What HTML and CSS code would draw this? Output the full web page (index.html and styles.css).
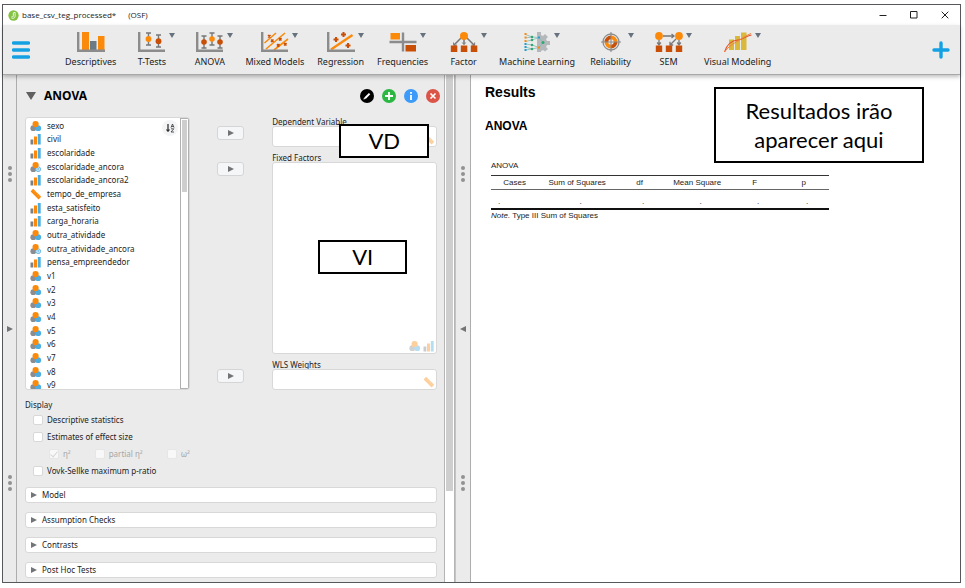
FILE: index.html
```html
<!DOCTYPE html>
<html lang="pt-BR">
<head>
<meta charset="utf-8">
<title>base_csv_teg_processed* (OSF)</title>
<link rel="stylesheet" href="styles.css">
</head>
<body>
<svg class="sprite" aria-hidden="true">
  <symbol id="nominal" viewBox="0 0 12 12"><circle cx="3.3" cy="8.2" r="2.9" fill="#8a8d91"/><circle cx="8.2" cy="8.2" r="2.9" fill="#4cade0"/><circle cx="5.6" cy="4" r="3.1" fill="#fb8a0b"/></symbol>
  <symbol id="nominal-text" viewBox="0 0 12 12"><circle cx="3.3" cy="8.2" r="2.9" fill="#8a8d91"/><circle cx="8.2" cy="8.2" r="2.4" fill="#dff1fb" stroke="#62b6e4"/><path d="M7 8h2.6M8.3 7v2.6" stroke="#62b6e4" stroke-width=".7"/><circle cx="5.6" cy="4" r="3.1" fill="#fb8a0b"/></symbol>
  <symbol id="ordinal" viewBox="0 0 12 12"><path fill="#7d8084" d="M.5 6.5h2.8v5H.5z"/><path fill="#fb8a0b" d="M4 3.5h3v8H4z"/><path fill="#4cade0" d="M7.8 1h2.9v10.5H7.8z"/></symbol>
  <symbol id="scale" viewBox="0 0 12 12"><path fill="#fb8a0b" d="M3.1.8.6 3.4l8 8 2.6-2.6z"/><path d="M4.9 2.8 4 3.7M6.5 4.4l-.9.9M8.1 6l-.9.9M9.7 7.6l-.9.9" stroke="#ffd09a" stroke-width=".5"/></symbol>
  <symbol id="play" viewBox="0 0 6 6"><path fill="#727578" d="M0 0v6l6-3z"/></symbol>
  <symbol id="down" viewBox="0 0 6 5"><path fill="#66727e" d="M0 0h6L3 5z"/></symbol>
  <symbol id="grip" viewBox="0 0 4 16"><g fill="#929292"><circle cx="2" cy="2" r="2"/><circle cx="2" cy="8" r="2"/><circle cx="2" cy="14" r="2"/></g></symbol>
</svg>

<div class="window">
  <header class="titlebar">
    <svg class="app-logo" viewBox="0 0 12 12" aria-hidden="true"><circle cx="6" cy="6" r="5.6" fill="#84c341"/><path d="M7.8 2.6v4.2a2.6 2.6 0 0 1-4.3 1.7M5.8 3v3.6a1.3 1.3 0 0 1-2 .7M7.8 2.6 5.8 3" fill="none" stroke="#fff" stroke-width=".9"/></svg>
    <span>base_csv_teg_processed*</span><span class="source">(OSF)</span>
    <div class="window-controls">
      <button aria-label="Minimize"><svg viewBox="0 0 8 8"><path d="M.5 4.500h7"/></svg></button>
      <button aria-label="Maximize"><svg viewBox="0 0 8 8"><path d="M.5.5h6.500v6.500H.5z"/></svg></button>
      <button aria-label="Close"><svg viewBox="0 0 8 8"><path d="m.7.7 6.6 6.6M7.3.7.7 7.3"/></svg></button>
    </div>
  </header>

  <nav class="toolbar" aria-label="Analyses">
    <button class="menu" aria-label="Menu"><svg viewBox="0 0 18 18"><path d="M1.5 2h15M1.5 9h15M1.5 16h15" stroke="#14a1e3" stroke-width="3.4" stroke-linecap="round"/></svg></button>
    <div class="analyses">
      <button class="analysis"><svg class="icon" viewBox="0 0 28 20"><path fill="#fb8a0b" d="M5 0h7v18H5zM21 4h6.5v14H21z"/><path fill="#6c7a86" d="M13 9h6.500v9H13z"/><path d="M1.200 0v18.800H28" fill="none" stroke="#8c8c8c" stroke-width="2.400"/></svg>Descriptives</button>
      <button class="analysis"><svg class="icon" viewBox="0 0 28 20"><path d="M10.500 1v12M8 1h5M8 13h5M20.500 3v12M18 3h5M18 15h5" stroke="#777" stroke-width="1.400"/><circle cx="10.500" cy="7" r="2.900" fill="#fb8a0b"/><circle cx="20.500" cy="9.200" r="2.900" fill="#c94f07"/><path d="M1.200 0v18.800H27" fill="none" stroke="#8c8c8c" stroke-width="2.400"/></svg><svg class="arrow"><use href="#down"/></svg>T-Tests</button>
      <button class="analysis"><svg class="icon" viewBox="0 0 28 20"><path d="M8 4v12M5.500 4h5M5.500 16h5M16 1v12M13.500 1h5M13.500 13h5M24 4v12M21.500 4h5M21.500 16h5" stroke="#777" stroke-width="1.400"/><circle cx="8" cy="10" r="2.800" fill="#c94f07"/><circle cx="16" cy="7" r="2.800" fill="#fb8a0b"/><circle cx="24" cy="10" r="2.800" fill="#c94f07"/><path d="M1.200 0v18.800H27" fill="none" stroke="#8c8c8c" stroke-width="2.400"/></svg><svg class="arrow"><use href="#down"/></svg>ANOVA</button>
      <button class="analysis"><svg class="icon" viewBox="0 0 28 20"><path d="M3.500 11 15 1M5 17 24 1M13 18 27 7" stroke="#fb8a0b" stroke-width="1.600"/><path d="m7 3 2.500 2.500M9.500 3 7 5.500M10 7.500l2.500 2.500m0-2.500L10 10M18 6l2.500 2.500m0-2.500L18 8.500M16 12l2.500 2.500m0-2.500L16 14.500M23 11l2.500 2.500m0-2.500L23 13.500" stroke="#c94f07" stroke-width="1.500"/><path d="M1.200 0v18.800H27" fill="none" stroke="#8c8c8c" stroke-width="2.400"/></svg><svg class="arrow"><use href="#down"/></svg>Mixed Models</button>
      <button class="analysis"><svg class="icon" viewBox="0 0 28 20"><path d="M4 17.500 25.500 3" stroke="#fb8a0b" stroke-width="2.300"/><path d="M6.500 7.500h5M9 5v5M14 2.500h5M16.500 0v5M18.500 13.500h5M21 11v5" stroke="#c94f07" stroke-width="2"/><path d="M1.200 0v18.800H28" fill="none" stroke="#8c8c8c" stroke-width="2.400"/></svg><svg class="arrow"><use href="#down"/></svg>Regression</button>
      <button class="analysis"><svg class="icon" viewBox="0 0 28 20"><path d="M14 .500v19M.500 10h27" stroke="#8c8c8c" stroke-width="2.400"/><path fill="#fb8a0b" d="M1.500 1h9.500v6.500H1.500z"/><path fill="#c94f07" d="M16.500 13h10.500v6.500H16.500z"/></svg><svg class="arrow"><use href="#down"/></svg>Frequencies</button>
      <button class="analysis"><svg class="icon" viewBox="0 0 28 20"><path d="M11 6 4 13M14 7v5M17 6l7 7" stroke="#777" stroke-width="1.500"/><path d="m3.500 10.500.300 3 3-.500M12.300 10.500 14 12.700l1.700-2.200M21.500 13l3 .500.200-3" fill="none" stroke="#777"/><circle cx="14" cy="4" r="4" fill="#fb8a0b"/><path fill="#c94f07" d="M.800 13.500h6.500V20H.800zM10.800 13.500h6.500V20h-6.500zM20.800 13.500h6.500V20h-6.500z"/></svg><svg class="arrow"><use href="#down"/></svg>Factor</button>
      <button class="analysis"><svg class="icon" viewBox="0 0 28 20"><path fill="#b5b8ba" d="M14 0h4v3l2 1 2-2 3 3-2 2 1 2h3v4h-3l-1 2 2 2-3 2.500-2-1.500-2 1V20h-4z"/><path d="M2.500 2.500 9 5 16 5.500 20 10.500 16 15.500 9 13 2.500 12M2.500 6 9 5M2.500 9.500 9 8 16 5.500M2.500 15l6.500 2 7-1.500M2.500 18 9 17" fill="none" stroke="#87b7ae" stroke-width=".8"/><g fill="#2eaa76"><circle cx="9" cy="5" r="1.300"/><circle cx="9" cy="8" r="1.300"/><circle cx="9" cy="13" r="1.300"/><circle cx="9" cy="17" r="1.300"/><circle cx="20" cy="10.500" r="1.500"/></g><path fill="#fb8a0b" d="M1.500 1h2v2h-2zM1.500 4.500h2v2h-2zM1.500 8h2v2h-2zM15 14.500h2v2h-2z"/><path fill="#229fd8" d="M1.500 11h2v2h-2zM1.500 14h2v2h-2zM1.500 17h2v2h-2zM15 4.500h2v2h-2z"/></svg><svg class="arrow"><use href="#down"/></svg>Machine Learning</button>
      <button class="analysis"><svg class="icon" viewBox="0 0 28 20"><path d="M14 3.500a6.500 6.500 0 0 1 6.500 6.500H14v6.500A6.500 6.500 0 0 1 7.500 10H14z" fill="#fb8a0b"/><path d="M14 3.500V10H7.500A6.500 6.500 0 0 1 14 3.500zM14 16.500V10h6.500a6.500 6.500 0 0 1-6.500 6.500z" fill="#c94f07"/><circle cx="14" cy="10" r="2.700" fill="#ebebeb"/><circle cx="14" cy="10" r="8" fill="none" stroke="#8c8c8c" stroke-width="1.300"/><path d="M14 0v20M4 10h20" stroke="#8c8c8c" stroke-width="1.100"/></svg><svg class="arrow"><use href="#down"/></svg>Reliability</button>
      <button class="analysis"><svg class="icon" viewBox="0 0 28 20"><path d="M8 4h11M4 8v5M24 8v5M21 7l-6 6M16.500 2 19 4l-2.500 2M2.200 10.500 4 13l1.800-2.500M22.200 10.500 24 13l1.800-2.500M15 9.800V13h3.200" fill="none" stroke="#777" stroke-width="1.300"/><circle cx="4" cy="4" r="3.900" fill="#fb8a0b"/><circle cx="24" cy="4" r="3.900" fill="#fb8a0b"/><path fill="#c94f07" d="M.800 13.500h6.400V20H.800zM10.800 13.500h6.400V20h-6.400zM20.800 13.500h6.400V20h-6.400z"/></svg><svg class="arrow"><use href="#down"/></svg>SEM</button>
      <button class="analysis"><svg class="icon" viewBox="0 0 28 20"><path fill="#d9b93c" d="M5 7.500h5V18H5zM11 4h5v14h-5zM17 .500h5.500V18H17z"/><path d="M.500 20C3 12 8 8.500 14 8S21 4 27.500 3" fill="none" stroke="#e2552b" stroke-width="1.100"/><path d="M.500 20C5 14 9 12 14 9S21 4 27 1.500" fill="none" stroke="#f3813a"/></svg><svg class="arrow"><use href="#down"/></svg>Visual Modeling</button>
    </div>
    <button class="add" aria-label="Add module"><svg viewBox="0 0 18 18"><path d="M9 2v14M2 9h14" stroke="#14a1e3" stroke-width="3.400" stroke-linecap="round"/></svg></button>
  </nav>

  <main class="workspace">
    <div class="rail rail-left">
      <svg class="grip"><use href="#grip"/></svg>
      <svg class="rail-arrow" viewBox="0 0 6 6"><use href="#play"/></svg>
      <svg class="grip"><use href="#grip"/></svg>
    </div>

    <section class="form-panel">
      <div class="form">
        <div class="form-header">
          <svg class="collapse" viewBox="0 0 10 8"><path fill="#606060" d="M0 0h10L5 8z"/></svg>
          <h1>ANOVA</h1>
          <button aria-label="Edit title"><svg viewBox="0 0 14 14"><circle cx="7" cy="7" r="7"/><path d="M5 9.200 9.600 4.600" stroke="#fff" stroke-width="2"/><path d="m3.400 10.600.7-2 1.300 1.300z" fill="#fff"/></svg></button>
          <button aria-label="Duplicate"><svg viewBox="0 0 14 14"><circle cx="7" cy="7" r="7" fill="#2bb741"/><path d="M7 3v8M3 7h8" stroke="#fff" stroke-width="1.800"/></svg></button>
          <button aria-label="Information"><svg viewBox="0 0 14 14"><circle cx="7" cy="7" r="7" fill="#3c9af8"/><path d="M7 3v1.800M7 6v5" stroke="#fff" stroke-width="1.800"/></svg></button>
          <button aria-label="Remove"><svg viewBox="0 0 14 14"><circle cx="7" cy="7" r="7" fill="#dc5448"/><path d="m4.500 4.500 5 5m0-5-5 5" stroke="#fff" stroke-width="1.600"/></svg></button>
        </div>

        <div class="assign">
          <div class="available">
            <ul class="variables">
              <li><svg><use href="#nominal"/></svg>sexo</li>
              <li><svg><use href="#ordinal"/></svg>civil</li>
              <li><svg><use href="#ordinal"/></svg>escolaridade</li>
              <li><svg><use href="#nominal-text"/></svg>escolaridade_ancora</li>
              <li><svg><use href="#ordinal"/></svg>escolaridade_ancora2</li>
              <li><svg><use href="#scale"/></svg>tempo_de_empresa</li>
              <li><svg><use href="#ordinal"/></svg>esta_satisfeito</li>
              <li><svg><use href="#ordinal"/></svg>carga_horaria</li>
              <li><svg><use href="#nominal"/></svg>outra_atividade</li>
              <li><svg><use href="#nominal-text"/></svg>outra_atividade_ancora</li>
              <li><svg><use href="#ordinal"/></svg>pensa_empreendedor</li>
              <li><svg><use href="#nominal"/></svg>v1</li>
              <li><svg><use href="#nominal"/></svg>v2</li>
              <li><svg><use href="#nominal"/></svg>v3</li>
              <li><svg><use href="#nominal"/></svg>v4</li>
              <li><svg><use href="#nominal"/></svg>v5</li>
              <li><svg><use href="#nominal"/></svg>v6</li>
              <li><svg><use href="#nominal"/></svg>v7</li>
              <li><svg><use href="#nominal"/></svg>v8</li>
              <li><svg><use href="#nominal"/></svg>v9</li>
            </ul>
            <button class="sort" aria-label="Sort variables"><svg viewBox="0 0 16 16"><circle cx="8" cy="8" r="8" fill="#f3f4f5"/><path d="M6 4v7" stroke="#333" stroke-width="1.300"/><path d="M3.800 9.500h4.400L6 12.300z" fill="#333"/><path d="m9 7.600 1.500-3.600L12 7.600M9.500 6.500h2M9 8.800h2.800L9 12h3" fill="none" stroke="#333" stroke-width=".8"/></svg></button>
            <span class="list-scroll"><span></span></span>
          </div>

          <button class="move" aria-label="Assign dependent variable"><svg><use href="#play"/></svg></button>
          <div class="slot">
            <span class="slot-label" id="dv">Dependent Variable</span>
            <div class="drop" role="listbox" aria-labelledby="dv"><svg><use href="#scale"/></svg></div>
            <div class="callout callout-vd">VD</div>
          </div>

          <button class="move" aria-label="Assign fixed factors"><svg><use href="#play"/></svg></button>
          <div class="slot">
            <span class="slot-label" id="ff">Fixed Factors</span>
            <div class="drop" role="listbox" aria-labelledby="ff"><svg><use href="#nominal"/></svg><svg><use href="#ordinal"/></svg></div>
            <div class="callout callout-vi">VI</div>
          </div>

          <button class="move" aria-label="Assign WLS weights"><svg><use href="#play"/></svg></button>
          <div class="slot">
            <span class="slot-label" id="wls">WLS Weights</span>
            <div class="drop" role="listbox" aria-labelledby="wls"><svg><use href="#scale"/></svg></div>
          </div>
        </div>

        <fieldset class="display">
          <legend>Display</legend>
          <label><input type="checkbox">Descriptive statistics</label>
          <label><input type="checkbox">Estimates of effect size</label>
          <div class="effects">
            <label><input type="checkbox" checked disabled>η²</label>
            <label><input type="checkbox" disabled>partial η²</label>
            <label><input type="checkbox" disabled>ω²</label>
          </div>
          <label><input type="checkbox">Vovk-Sellke maximum p-ratio</label>
        </fieldset>

        <div class="sections">
          <button><svg><use href="#play"/></svg>Model</button>
          <button><svg><use href="#play"/></svg>Assumption Checks</button>
          <button><svg><use href="#play"/></svg>Contrasts</button>
          <button><svg><use href="#play"/></svg>Post Hoc Tests</button>
        </div>
      </div>
      <div class="form-scroll"><span></span></div>
    </section>

    <div class="rail rail-middle">
      <svg class="grip"><use href="#grip"/></svg>
      <svg class="rail-arrow flipped" viewBox="0 0 6 6"><use href="#play"/></svg>
      <svg class="grip"><use href="#grip"/></svg>
    </div>

    <section class="results">
      <h2>Results</h2>
      <h3>ANOVA</h3>
      <table>
        <caption>ANOVA</caption>
        <colgroup><col class="c-cases"><col class="c-sum"><col class="c-df"><col class="c-mean"><col class="c-f"><col class="c-p"></colgroup>
        <thead><tr><th>Cases</th><th>Sum of Squares</th><th>df</th><th>Mean Square</th><th>F</th><th>p</th></tr></thead>
        <tbody><tr><td>.</td><td>.</td><td>.</td><td>.</td><td>.</td><td>.</td></tr></tbody>
      </table>
      <p class="note"><em>Note.</em> Type III Sum of Squares</p>
      <div class="callout callout-results">Resultados irão<br>aparecer aqui</div>
    </section>
  </main>
</div>
</body>
</html>
```
FILE: styles.css
```css
* { box-sizing: border-box; }

html { height: 100%; }

body {
  margin: 0;
  height: 100%;
  padding: 4px 4px 5px 2px;
  background: #fff;
  color: #1c1c1c;
  font: 8px/10px "Noto Sans", "Open Sans", sans-serif;
}

svg { display: block; flex: none; }

.sprite { position: absolute; width: 0; height: 0; }

button {
  margin: 0;
  padding: 0;
  border: 0;
  background: none;
  color: inherit;
  font: inherit;
}

.window {
  display: flex;
  flex-direction: column;
  height: 100%;
  border: 1px solid #56585c;
}

/* Title bar */
.titlebar {
  display: flex;
  align-items: center;
  height: 20px;
  padding: 0 11px 0 5px;
  background: #fff;
  font-family: "Open Sans", "Noto Sans", sans-serif;
}

.app-logo { width: 11px; height: 11px; margin-right: 3px; }
.source { margin-left: 12px; }
.window-controls { display: flex; gap: 23px; margin-left: auto; }
.window-controls svg { width: 8px; height: 8px; fill: none; stroke: #222; stroke-width: 1; }

/* Toolbar */
.toolbar {
  position: relative;
  z-index: 2;
  display: flex;
  align-items: center;
  height: 50px;
  padding: 0 10px 0 9px;
  background: #ebebeb;
  border-bottom: 1px solid #a8a8a8;
  box-shadow: 0 2px 4px rgba(0, 0, 0, .25);
}

.menu svg, .add svg { width: 18px; height: 18px; }
.analyses { display: flex; gap: 13px; margin-left: 35px; }
.add { margin-left: auto; }

.analysis {
  position: relative;
  display: flex;
  flex-direction: column;
  align-items: center;
  gap: 4px;
  min-width: 45px;
  font-size: 9px;
  line-height: 12px;
  white-space: nowrap;
}

.icon { width: 28px; height: 20px; }
.arrow { position: absolute; top: 1px; left: calc(50% + 17px); width: 6px; height: 5px; }

/* Workspace */
.workspace {
  flex: 1;
  min-height: 0;
  display: grid;
  grid-template-columns: 14px minmax(0, 438fr) 16px minmax(0, 489fr);
}

.rail {
  display: flex;
  flex-direction: column;
  align-items: center;
  justify-content: space-between;
  padding: 91px 0;
  background: #ebebeb;
  border-right: 1px solid #adadad;
}

.rail-middle { border-left: 1px solid #c4c4c4; }

.grip { width: 4px; height: 16px; }
.rail-arrow { width: 6px; height: 6px; }
.flipped { transform: rotate(180deg); }

.form-panel { display: flex; min-width: 0; background: #ebebeb; }
.form { flex: 1; min-width: 0; padding: 0 7px 0 8px; }

.form-scroll {
  width: 11px;
  padding: 0 1px;
  background: #fff;
  border-left: 1px solid #b5b5b5;
  border-right: 1px solid #b5b5b5;
}

.form-scroll span { display: block; height: 82%; background: #cecece; }

.form-header {
  display: flex;
  align-items: center;
  gap: 8px;
  height: 42px;
  margin-right: -3px;
  padding-left: 1px;
}

.form-header h1 { flex: 1; margin: 0; font-size: 12px; line-height: 16px; color: #000; }
.collapse { width: 10px; height: 8px; }
.form-header button svg { width: 14px; height: 14px; }

/* Variable assignment */
.assign {
  display: grid;
  grid-template-columns: 2fr 1fr 2fr;
  grid-template-rows: 30px 201px 30px;
  row-gap: 6px;
}

.available {
  position: relative;
  grid-row: 1 / 4;
  display: flex;
  padding: 1px 0 1px 4px;
  background: #fff;
  border: 1px solid #d8d8d8;
  border-radius: 3px;
  overflow: hidden;
}

.variables {
  flex: 1;
  display: grid;
  grid-auto-rows: 1fr;
  height: 273px;
  margin: 0;
  padding: 0;
  list-style: none;
}

.variables li { display: flex; align-items: center; gap: 5px; }
.variables svg { width: 12px; height: 12px; }
.sort { position: absolute; top: 2px; right: 11px; }
.sort svg { width: 16px; height: 16px; }

.list-scroll {
  width: 9px;
  margin: -1px 0;
  padding: 1px;
  border: 1px solid #b0b0b0;
}

.list-scroll span { display: block; height: 27%; background: #cecece; }

.move {
  display: flex;
  align-items: center;
  justify-content: center;
  align-self: start;
  justify-self: center;
  width: 27px;
  height: 14px;
  margin-top: 9px;
  background: #f5f6f7;
  border: 1px solid #d5d5d5;
  border-radius: 3px;
}

.move svg, .sections svg { width: 6px; height: 6px; }

.slot { position: relative; display: flex; flex-direction: column; }
.slot-label { height: 9px; line-height: 9px; }

.drop {
  flex: 1;
  display: flex;
  align-items: flex-end;
  justify-content: flex-end;
  gap: 2px;
  padding: 1px;
  background: #fff;
  border: 1px solid #d8d8d8;
  border-radius: 3px;
}

.drop svg { width: 12px; height: 12px; opacity: .4; }

/* Display options */
.display { margin: 10px 0 0; padding: 0; border: 0; }
.display legend { padding: 0 0 1px; }

.display label { display: flex; align-items: center; gap: 4px; height: 17px; }
.display > label { padding-left: 8px; }
.effects { display: flex; gap: 24px; padding-left: 24px; color: #a6a6a6; }

.display input {
  appearance: none;
  display: grid;
  place-items: center;
  width: 10px;
  height: 10px;
  margin: 0;
  background: #fff;
  border: 1px solid #d8d8d8;
  border-radius: 2px;
}

.display input:disabled { background: #f8f8f8; border-color: #e6e6e6; }

.display input:checked::after {
  content: "";
  width: 3px;
  height: 6px;
  border: solid #d6d6d6;
  border-width: 0 1px 1px 0;
  transform: rotate(40deg);
}

/* Collapsed sections */
.sections { display: grid; gap: 9px; margin-top: 8px; }

.sections button {
  display: flex;
  align-items: center;
  gap: 5px;
  height: 16px;
  padding: 0 5px;
  background: #fff;
  border: 1px solid #d8d8d8;
  border-radius: 3px;
  text-align: left;
}

/* Results */
.results {
  position: relative;
  padding: 8px 14px;
  background: #fff;
  font-family: "Liberation Sans", Arial, sans-serif;
}

.results h2 { margin: 0 0 18px; font-size: 14px; line-height: 18px; color: #000; }
.results h3 { margin: 0 0 28px; font-size: 12px; line-height: 14px; color: #000; }

.results table {
  width: 338px;
  max-width: 100%;
  margin-left: 6px;
  table-layout: fixed;
  border-collapse: collapse;
  border-top: 1px solid #333;
  border-bottom: 2px solid #111;
}

.results caption { padding-bottom: 4px; text-align: left; }
.results th { height: 14px; padding: 0; font-weight: 400; border-bottom: 1px solid #666; }
.results td { height: 19px; padding: 6px 0 0 7px; text-align: center; }
.results td:first-child { text-align: left; }
.c-cases, .c-df, .c-f { width: 14%; }
.c-sum { width: 23%; }
.c-mean { width: 20%; }
.c-p { width: 15%; }
.note { margin: 1px 0 0 6px; }

/* Annotations */
.callout {
  position: absolute;
  z-index: 1;
  background: #fff;
  border: 2px solid #000;
  color: #000;
  font: 22px/29px Lato, Carlito, sans-serif;
  text-align: center;
}

.callout-vd { top: 7px; left: 67px; width: 90px; height: 34px; }
.callout-vi { top: 87px; left: 46px; width: 89px; height: 34px; }
.callout-results { top: 12px; right: 36px; width: 210px; padding: 7px 0; }
```
